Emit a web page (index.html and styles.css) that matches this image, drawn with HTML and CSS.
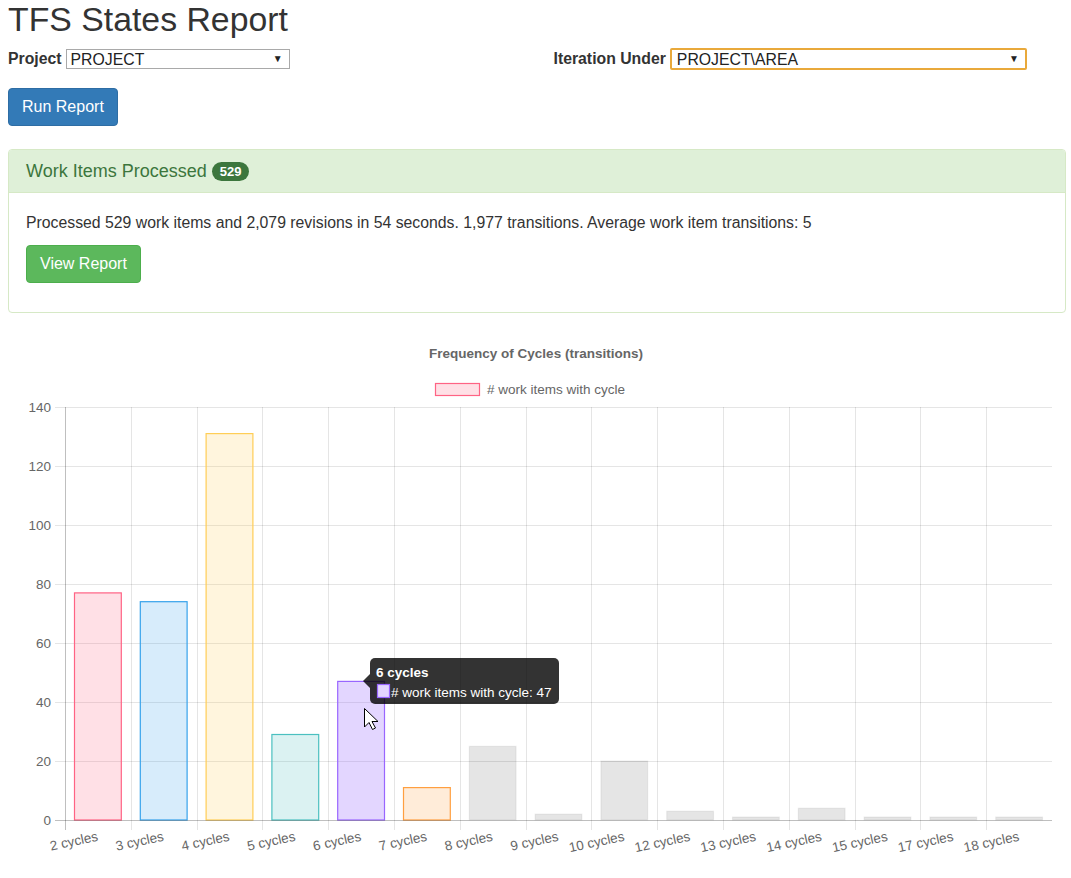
FILE: index.html
```html
<!DOCTYPE html>
<html lang="en">
<head>
<meta charset="utf-8">
<title>TFS States Report</title>
<link rel="stylesheet" href="styles.css">
</head>
<body>
<div class="page">
  <h1 class="title">TFS States Report</h1>
  <div class="form-row">
    <div class="field">
      <label class="field-label" for="project">Project</label>
      <div class="select-wrap select-project">
        <select id="project" class="select"><option>PROJECT</option></select>
      </div>
    </div>
    <div class="field">
      <label class="field-label" for="iteration">Iteration Under</label>
      <div class="select-wrap select-iteration focused">
        <select id="iteration" class="select"><option>PROJECT\AREA</option></select>
      </div>
    </div>
  </div>
  <button class="btn btn-primary">Run Report</button>

  <div class="panel">
    <div class="panel-heading">Work Items Processed <span class="badge">529</span></div>
    <div class="panel-body">
      <p class="summary">Processed 529 work items and 2,079 revisions in 54 seconds. 1,977 transitions. Average work item transitions: 5</p>
      <p class="actions"><button class="btn btn-success">View Report</button></p>
    </div>
  </div>

  <svg class="chart" width="1058" height="550" viewBox="8 320 1058 550" xmlns="http://www.w3.org/2000/svg">
    <text class="chart-title" x="536" y="354">Frequency of Cycles (transitions)</text>
    <rect x="435.5" y="383.5" width="44" height="12" fill="rgba(255,99,132,0.2)" stroke="#ff6384" stroke-width="1.2"/>
    <text class="legend-text" x="487" y="390.5"># work items with cycle</text>

    <g class="grid" stroke="rgba(0,0,0,0.1)" stroke-width="1">
      <line x1="55" y1="407.5" x2="1052" y2="407.5"/>
      <line x1="55" y1="466.5" x2="1052" y2="466.5"/>
      <line x1="55" y1="525.5" x2="1052" y2="525.5"/>
      <line x1="55" y1="584.5" x2="1052" y2="584.5"/>
      <line x1="55" y1="643.5" x2="1052" y2="643.5"/>
      <line x1="55" y1="702.5" x2="1052" y2="702.5"/>
      <line x1="55" y1="761.5" x2="1052" y2="761.5"/>
      <line x1="131.5" y1="407" x2="131.5" y2="830"/>
      <line x1="197.5" y1="407" x2="197.5" y2="830"/>
      <line x1="262.5" y1="407" x2="262.5" y2="830"/>
      <line x1="328.5" y1="407" x2="328.5" y2="830"/>
      <line x1="394.5" y1="407" x2="394.5" y2="830"/>
      <line x1="460.5" y1="407" x2="460.5" y2="830"/>
      <line x1="526.5" y1="407" x2="526.5" y2="830"/>
      <line x1="591.5" y1="407" x2="591.5" y2="830"/>
      <line x1="657.5" y1="407" x2="657.5" y2="830"/>
      <line x1="723.5" y1="407" x2="723.5" y2="830"/>
      <line x1="789.5" y1="407" x2="789.5" y2="830"/>
      <line x1="855.5" y1="407" x2="855.5" y2="830"/>
      <line x1="920.5" y1="407" x2="920.5" y2="830"/>
      <line x1="986.5" y1="407" x2="986.5" y2="830"/>
    </g>

    <g class="bars" stroke-width="1.2">
      <rect x="74.5" y="592.9" width="46.8" height="227.1" fill="rgba(255,99,132,0.2)" stroke="#ff6384"/>
      <rect x="140.3" y="601.7" width="46.8" height="218.3" fill="rgba(54,162,235,0.2)" stroke="#36a2eb"/>
      <rect x="206.1" y="433.6" width="46.8" height="386.4" fill="rgba(255,206,86,0.2)" stroke="#ffce56"/>
      <rect x="271.9" y="734.5" width="46.8" height="85.5" fill="rgba(75,192,192,0.2)" stroke="#4bc0c0"/>
      <rect x="337.7" y="681.4" width="46.8" height="138.6" fill="rgba(153,102,255,0.27)" stroke="#9966ff"/>
      <rect x="403.5" y="787.6" width="46.8" height="32.4" fill="rgba(255,159,64,0.2)" stroke="#ff9f40"/>
      <rect x="469.3" y="746.3" width="46.8" height="73.7" fill="rgba(0,0,0,0.1)" stroke="rgba(0,0,0,0.06)"/>
      <rect x="535.1" y="814.1" width="46.8" height="5.9" fill="rgba(0,0,0,0.1)" stroke="rgba(0,0,0,0.06)"/>
      <rect x="600.9" y="761" width="46.8" height="59" fill="rgba(0,0,0,0.1)" stroke="rgba(0,0,0,0.06)"/>
      <rect x="666.7" y="811.2" width="46.8" height="8.8" fill="rgba(0,0,0,0.1)" stroke="rgba(0,0,0,0.06)"/>
      <rect x="732.5" y="817" width="46.8" height="3" fill="rgba(0,0,0,0.1)" stroke="rgba(0,0,0,0.06)"/>
      <rect x="798.3" y="808.2" width="46.8" height="11.8" fill="rgba(0,0,0,0.1)" stroke="rgba(0,0,0,0.06)"/>
      <rect x="864.1" y="817" width="46.8" height="3" fill="rgba(0,0,0,0.1)" stroke="rgba(0,0,0,0.06)"/>
      <rect x="929.9" y="817" width="46.8" height="3" fill="rgba(0,0,0,0.1)" stroke="rgba(0,0,0,0.06)"/>
      <rect x="995.7" y="817" width="46.8" height="3" fill="rgba(0,0,0,0.1)" stroke="rgba(0,0,0,0.06)"/>
    </g>

    <g class="axes" stroke="rgba(0,0,0,0.25)" stroke-width="1">
      <line x1="65.5" y1="407" x2="65.5" y2="830"/>
      <line x1="55" y1="820.5" x2="1052" y2="820.5"/>
    </g>

    <g class="y-labels">
      <text x="51" y="408">140</text>
      <text x="51" y="467">120</text>
      <text x="51" y="526">100</text>
      <text x="51" y="585">80</text>
      <text x="51" y="644">60</text>
      <text x="51" y="703">40</text>
      <text x="51" y="762">20</text>
      <text x="51" y="821">0</text>
    </g>

    <g class="x-labels">
      <text x="97.9" y="837" transform="rotate(-12 97.9 837)">2 cycles</text>
      <text x="163.7" y="837" transform="rotate(-12 163.7 837)">3 cycles</text>
      <text x="229.5" y="837" transform="rotate(-12 229.5 837)">4 cycles</text>
      <text x="295.3" y="837" transform="rotate(-12 295.3 837)">5 cycles</text>
      <text x="361.1" y="837" transform="rotate(-12 361.1 837)">6 cycles</text>
      <text x="426.9" y="837" transform="rotate(-12 426.9 837)">7 cycles</text>
      <text x="492.7" y="837" transform="rotate(-12 492.7 837)">8 cycles</text>
      <text x="558.5" y="837" transform="rotate(-12 558.5 837)">9 cycles</text>
      <text x="624.3" y="837" transform="rotate(-12 624.3 837)">10 cycles</text>
      <text x="690.1" y="837" transform="rotate(-12 690.1 837)">12 cycles</text>
      <text x="755.9" y="837" transform="rotate(-12 755.9 837)">13 cycles</text>
      <text x="821.7" y="837" transform="rotate(-12 821.7 837)">14 cycles</text>
      <text x="887.5" y="837" transform="rotate(-12 887.5 837)">15 cycles</text>
      <text x="953.3" y="837" transform="rotate(-12 953.3 837)">17 cycles</text>
      <text x="1019.1" y="837" transform="rotate(-12 1019.1 837)">18 cycles</text>
    </g>

    <g class="tooltip">
      <polygon points="363,681 370,674 370,688" fill="rgba(0,0,0,0.8)"/>
      <rect x="370" y="658" width="189" height="46" rx="5" ry="5" fill="rgba(0,0,0,0.8)"/>
      <text class="tooltip-title" x="376" y="677">6 cycles</text>
      <rect x="377.5" y="684.5" width="12" height="13" fill="#e3d5ff" stroke="#9966ff" stroke-width="1.2"/>
      <text class="tooltip-body" x="391" y="697"># work items with cycle: 47</text>
    </g>

    <polygon class="cursor" points="364.5,708.5 364.5,727 369,722.5 372.5,729.5 375.5,728 372,721.5 378,721.5" fill="#fff" stroke="#000" stroke-width="1" stroke-linejoin="miter"/>
  </svg>
</div>
</body>
</html>
```

FILE: styles.css
```css
html, body {
  margin: 0;
  padding: 0;
  overflow: hidden;
  background: #fff;
}

body {
  font-family: "Liberation Sans", Arial, Helvetica, sans-serif;
  font-size: 15.8px;
  line-height: 22px;
  color: #333;
}

.page {
  padding: 0 5px 0 8px;
}

.title {
  margin: 1px 0 0;
  font-size: 33.8px;
  line-height: 36px;
  font-weight: 400;
  color: #333;
}

.form-row {
  display: grid;
  grid-template-columns: 1fr 1fr;
  column-gap: 33px;
  margin-top: 11px;
  height: 22px;
  align-items: center;
}

.field {
  display: flex;
  align-items: center;
  gap: 4px;
}

.field-label {
  font-weight: 700;
  font-size: 15.8px;
  color: #333;
}

.select-wrap {
  position: relative;
  box-sizing: border-box;
  border: 1px solid #a9a9a9;
  background: #fff;
}

.select-wrap::after {
  content: "\25BC";
  position: absolute;
  right: 6px;
  top: 50%;
  transform: translateY(-50%);
  font-size: 10px;
  line-height: 10px;
  color: #222;
  pointer-events: none;
}

.select-project {
  width: 224px;
  height: 20px;
}

.select-iteration {
  width: 357px;
  height: 22px;
}

.select-wrap.focused {
  border: 2px solid #e9a93b;
  border-radius: 2px;
}

.select {
  appearance: none;
  -webkit-appearance: none;
  border: 0;
  outline: none;
  background: transparent;
  width: 100%;
  height: 100%;
  padding: 0 0 0 4px;
  margin: 0;
  font-family: "Liberation Sans", Arial, sans-serif;
  font-size: 15.8px;
  color: #222;
  display: block;
}

.focused .select {
  padding-left: 5px;
}

.btn {
  display: inline-block;
  box-sizing: border-box;
  height: 38px;
  padding: 7px 13px;
  font-family: "Liberation Sans", Arial, sans-serif;
  font-size: 16px;
  line-height: 22px;
  color: #fff;
  border: 1px solid transparent;
  border-radius: 4px;
  cursor: pointer;
}

.btn-primary {
  margin-top: 18px;
  background: #337ab7;
  border-color: #2e6da4;
}

.btn-success {
  background: #5cb85c;
  border-color: #4cae4c;
}

.panel {
  margin-top: 23px;
  border: 1px solid #d6e9c6;
  border-radius: 4px;
  background: #fff;
}

.panel-heading {
  background: #dff0d8;
  color: #3c763d;
  border-bottom: 1px solid #d6e9c6;
  border-radius: 3px 3px 0 0;
  padding: 11px 17px;
  font-size: 18px;
  line-height: 20px;
}

.badge {
  display: inline-block;
  padding: 3px 8px;
  font-size: 13px;
  font-weight: 700;
  line-height: 13px;
  color: #fff;
  background: #3c763d;
  border-radius: 10px;
  vertical-align: 1px;
}

.panel-body {
  padding: 19px 17px 18px;
}

.summary {
  margin: 0 0 11px;
}

.actions {
  margin: 0 0 11px;
  height: 38px;
}

.chart {
  display: block;
  margin-top: 7px;
  font-family: "Liberation Sans", Arial, Helvetica, sans-serif;
}

.chart-title {
  font-size: 13.5px;
  font-weight: 700;
  fill: #666;
  text-anchor: middle;
  dominant-baseline: middle;
}

.legend-text {
  font-size: 13.5px;
  fill: #666;
  dominant-baseline: middle;
}

.y-labels text {
  font-size: 13.5px;
  fill: #666;
  text-anchor: end;
  dominant-baseline: middle;
}

.x-labels text {
  font-size: 13.5px;
  fill: #666;
  text-anchor: end;
  dominant-baseline: middle;
}

.tooltip-title {
  font-size: 13.5px;
  font-weight: 700;
  fill: #fff;
}

.tooltip-body {
  font-size: 13.5px;
  fill: #fff;
}
```
